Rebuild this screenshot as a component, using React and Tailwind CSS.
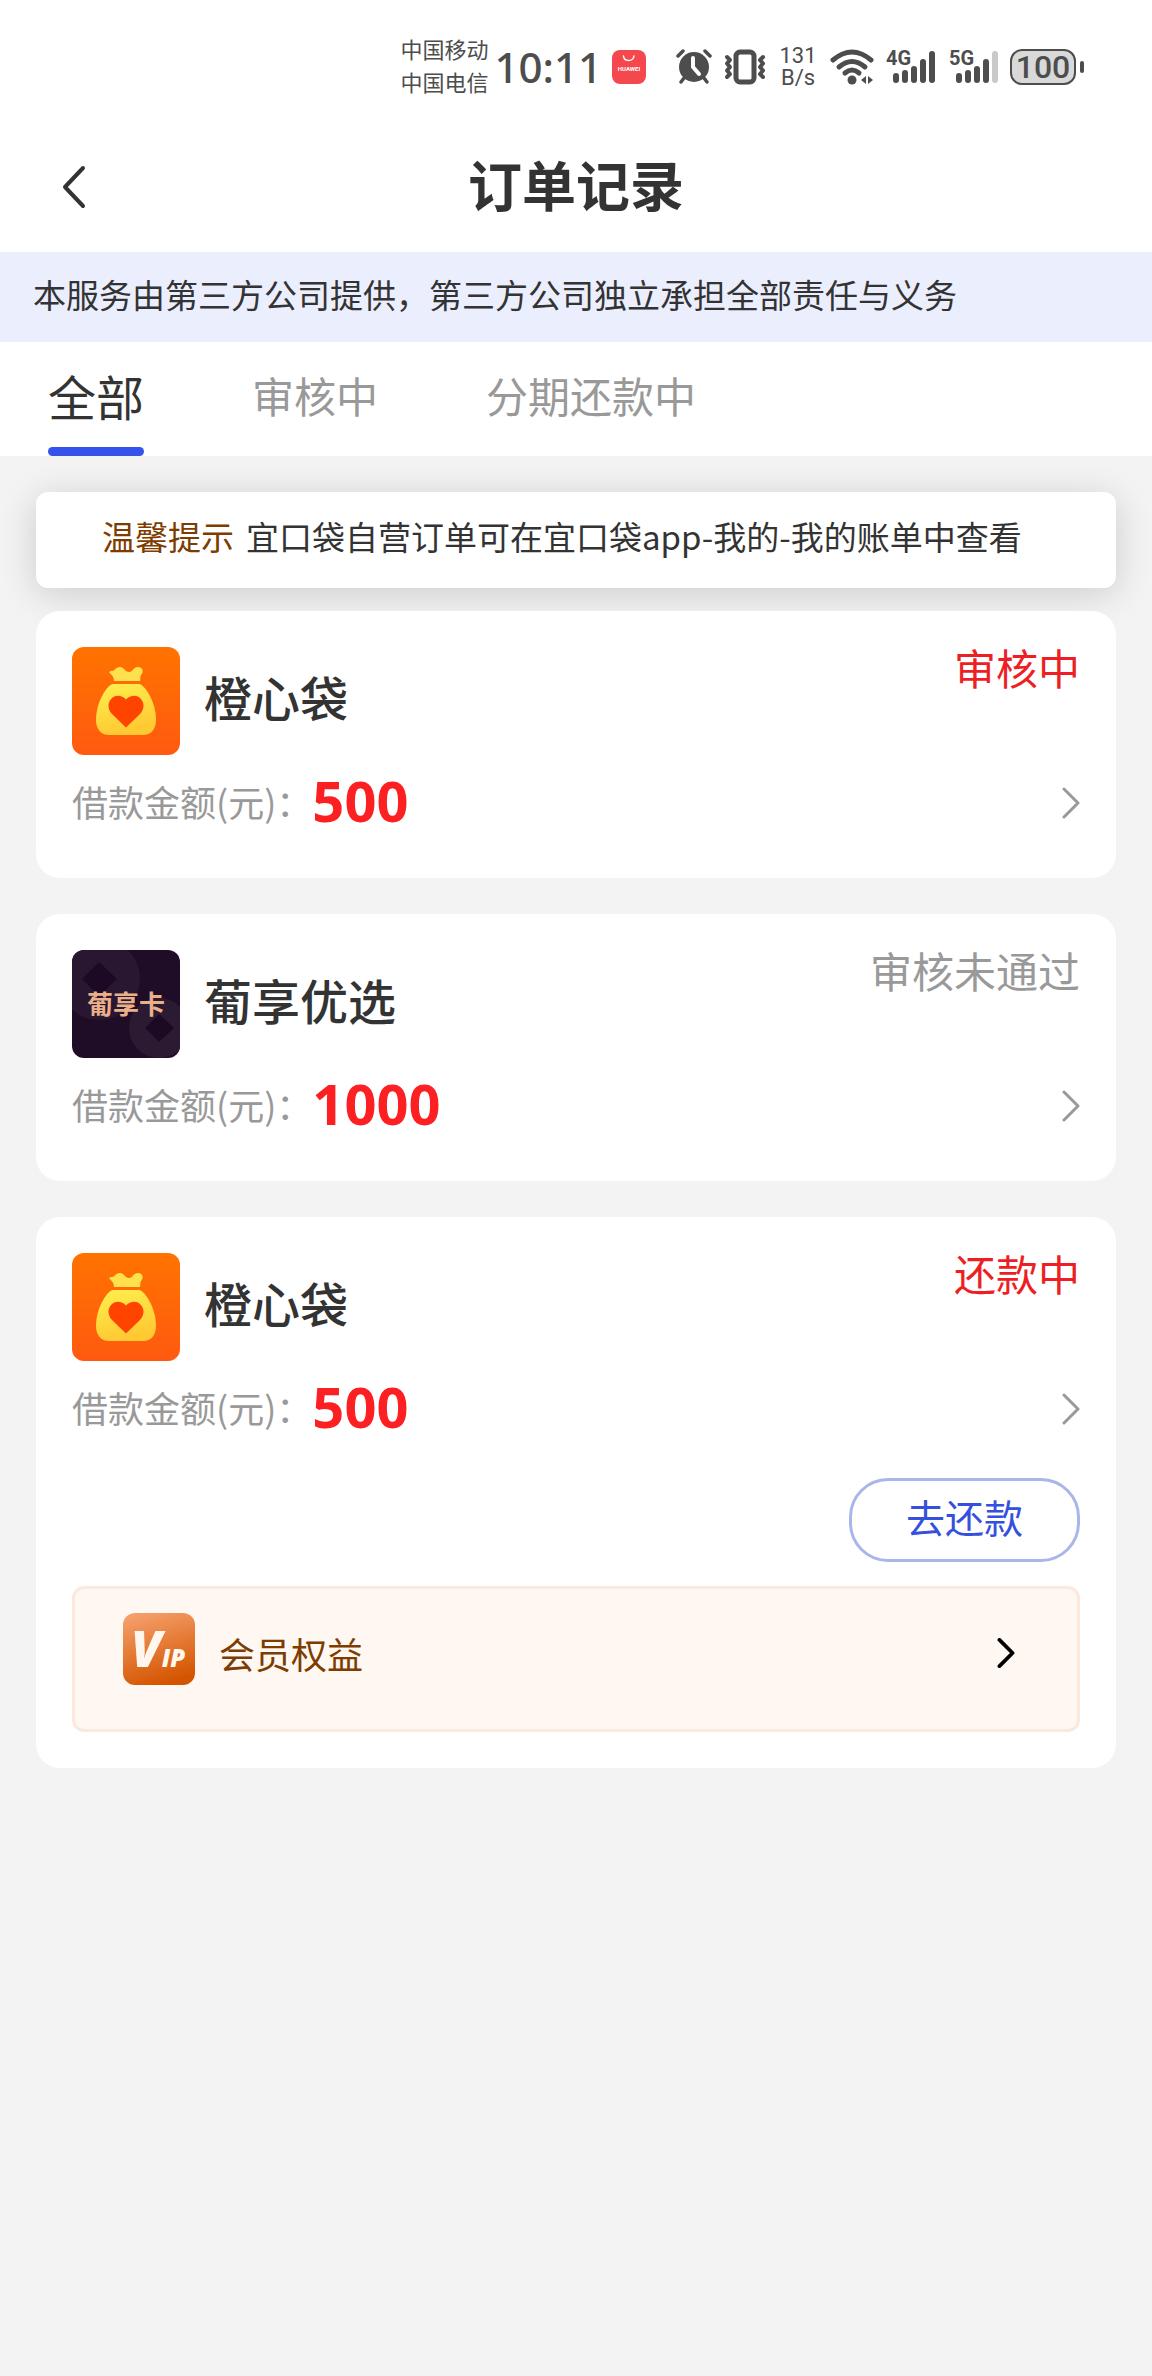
import { useState } from 'react'

const tabs = ['全部', '审核中', '分期还款中']

const orders = [
  { id: 1, name: '橙心袋', logo: 'bag', amount: '500', status: '审核中', statusColor: 'text-[#ee1f24]' },
  { id: 2, name: '葡享优选', logo: 'grape', amount: '1000', status: '审核未通过', statusColor: 'text-[#999999]' },
  { id: 3, name: '橙心袋', logo: 'bag', amount: '500', status: '还款中', statusColor: 'text-[#ee1f24]', repay: true },
]

function BagLogo() {
  return (
    <svg viewBox="0 0 108 108" className="size-[108px] shrink-0 rounded-xl" aria-hidden="true">
      <defs>
        <linearGradient id="bag-bg" x1="0" y1="0" x2="0" y2="1">
          <stop offset="0" stopColor="#ff7300" />
          <stop offset="1" stopColor="#ff5a10" />
        </linearGradient>
        <linearGradient id="bag-body" x1="0" y1="0" x2="0.3" y2="1">
          <stop offset="0" stopColor="#fff04e" />
          <stop offset="1" stopColor="#ffc933" />
        </linearGradient>
      </defs>
      <rect width="108" height="108" fill="url(#bag-bg)" />
      <path
        d="M42 34 C42 30 40 28 37.500 26 C37 24.500 38 24 40 24 C43 24 43 20 48 20 C52 20 53 25 57 25 C61 25 61 20 66 20 C71 20 72 25 69 28 C68 30 68.500 32 68 34 Z"
        fill="#ffe04f"
      />
      <path
        d="M41 37 H67 C72 37 84 54 84 73 C84 82 79 88 71 88 H37 C29 88 24 82 24 73 C24 54 36 37 41 37 Z"
        fill="url(#bag-body)"
      />
      <path
        d="M54 80.500 L40.500 67.500 C35 62 35.500 55 40 51 C44.500 47.500 50 48.500 54 52.500 C58 48.500 64 47.500 68 51 C72.500 55 73 62 67.500 67.500 Z"
        fill="#ff4400"
      />
    </svg>
  )
}

function GrapeLogo() {
  return (
    <svg viewBox="0 0 108 108" className="size-[108px] shrink-0 rounded-xl" role="img" aria-label="葡享卡">
      <rect width="108" height="108" fill="#1f0c26" />
      <circle cx="27" cy="29" r="41" fill="#291731" />
      <path d="M27 12 L45 29 L27 46 L10 29 Z" fill="#1c0a24" />
      <circle cx="87" cy="78" r="30" fill="#2c1a33" />
      <path d="M87 64 L102 78 L87 92 L73 78 Z" fill="#1c0a24" />
      <text
        x="54"
        y="64"
        textAnchor="middle"
        fill="#e9b08a"
        className="font-['Noto_Sans_CJK_SC',sans-serif] text-[26px] font-bold"
      >
        葡享卡
      </text>
    </svg>
  )
}

function VipLogo() {
  return (
    <svg viewBox="0 0 72 72" className="size-[72px] shrink-0 rounded-xl" aria-hidden="true">
      <defs>
        <linearGradient id="vip-bg" x1="0.2" y1="0" x2="0.5" y2="1">
          <stop offset="0" stopColor="#f5a06c" />
          <stop offset="1" stopColor="#d45500" />
        </linearGradient>
      </defs>
      <rect width="72" height="72" fill="url(#vip-bg)" />
      <text x="8" y="54" fill="#fff7ee" className="font-['Open_Sans',sans-serif] text-[50px] font-extrabold italic">
        V<tspan className="text-[24px]">IP</tspan>
      </text>
    </svg>
  )
}

function Chevron({ className, strokeWidth }) {
  return (
    <svg
      viewBox="0 0 18 32"
      className={className}
      fill="none"
      stroke="currentColor"
      strokeWidth={strokeWidth}
      strokeLinecap="round"
      strokeLinejoin="round"
      aria-hidden="true"
    >
      <path d="M2 2 L16 16 L2 30" />
    </svg>
  )
}

function Signal({ label, weak }) {
  return (
    <svg viewBox="0 -8 51 52" className="h-[52px] w-[51px] shrink-0" fill="none" strokeWidth="6" strokeLinecap="round" stroke="#4d4d4d" aria-label={label}>
      <text x="0" y="16" stroke="none" fill="#4d4d4d" className="font-['Roboto',sans-serif] text-[20px] font-bold">{label}</text>
      <path d="M10 27 V31 M19 24 V31 M28 20 V31 M37 13 V31" />
      <path d="M46 5 V31" stroke={weak ? '#c9c9c9' : '#4d4d4d'} />
    </svg>
  )
}

function StatusBar() {
  return (
    <div className="flex h-[122px] items-center justify-end pt-3 pr-[68px] text-[#4d4d4d]">
      <div className="pb-1 text-[22px] leading-[33px]">
        <div>中国移动</div>
        <div>中国电信</div>
      </div>
      <div className="ml-1.5 font-['Noto_Sans',sans-serif] text-[42px] font-medium leading-none">10:11</div>
      {/* AppGallery notification */}
      <svg viewBox="0 0 34 34" className="ml-2.5 size-[34px] shrink-0" aria-hidden="true">
        <rect width="34" height="34" rx="8" fill="#f4484e" />
        <path d="M11.500 6 C12 12 21 12 22 6" fill="none" stroke="#fff" strokeWidth="1.500" strokeLinecap="round" />
        <text x="17" y="21" textAnchor="middle" fill="#fff" className="font-['Roboto',sans-serif] text-[6px] font-bold">HUAWEI</text>
      </svg>
      {/* alarm */}
      <svg viewBox="0 0 36 36" className="ml-[30px] size-9 shrink-0" fill="none" stroke="#4d4d4d" strokeLinecap="round" strokeLinejoin="round" aria-hidden="true">
        <circle cx="18" cy="18" r="15" fill="#4d4d4d" stroke="none" />
        <path d="M2 7 L7 2 M34 7 L29 2" strokeWidth="3.500" />
        <path d="M8 29 L5 33 M28 29 L31 33" strokeWidth="3.500" />
        <path d="M17 9 V18 L23 25" stroke="#fff" strokeWidth="4" />
      </svg>
      {/* vibrate */}
      <svg viewBox="0 0 42 36" className="ml-3 h-9 w-[42px] shrink-0" fill="none" stroke="#4d4d4d" strokeLinecap="round" strokeLinejoin="round" aria-hidden="true">
        <rect x="12" y="3" width="18" height="30" rx="4" strokeWidth="5" />
        <path d="M3 8 L6 11 L3 14.500 L6 18 L3 21.500 L6 25 L3 28" strokeWidth="4" />
        <path d="M39 8 L36 11 L39 14.500 L36 18 L39 21.500 L36 25 L39 28" strokeWidth="4" />
      </svg>
      <div className="ml-3 w-10 text-center font-['Roboto',sans-serif] text-[22px] leading-[22px]">
        <div>131</div>
        <div>B/s</div>
      </div>
      {/* wifi */}
      <svg viewBox="0 0 44 36" className="ml-3 h-9 w-11 shrink-0" fill="none" stroke="#4d4d4d" strokeWidth="5" strokeLinecap="round" aria-hidden="true">
        <path d="M3 11 Q22 -5 41 11" />
        <path d="M9 18 Q22 7 35 18" />
        <path d="M15 24 Q22 18 29 24" />
        <circle cx="22" cy="31" r="4.500" fill="#4d4d4d" stroke="none" />
        <path d="M36 27 V35 L31 31 Z M38 27 V35 L43 31 Z" fill="#4d4d4d" stroke="none" />
      </svg>
      <div className="ml-3 flex gap-3">
        <Signal label="4G" />
        <Signal label="5G" weak />
      </div>
      <div className="ml-2.5 flex items-center gap-1">
        <div className="flex h-9 w-[66px] items-center justify-center rounded-xl border-2 border-[#4d4d4d] bg-[#d9d9d9] font-['Roboto',sans-serif] text-[32px] font-medium leading-none">
          100
        </div>
        <div className="h-3 w-1 rounded-full bg-[#4d4d4d]" />
      </div>
    </div>
  )
}

function OrderCard({ order }) {
  return (
    <li className={`relative rounded-3xl bg-white px-9 pt-9 ${order.repay ? 'pb-9' : 'pb-[39px]'}`}>
      <div className="flex items-start justify-between">
        <div className="flex items-center gap-6">
          {order.logo === 'bag' ? <BagLogo /> : <GrapeLogo />}
          <h2 className="pb-2.5 text-[48px] font-medium leading-[72px]">{order.name}</h2>
        </div>
        <span className={`text-[42px] leading-10 ${order.statusColor}`}>{order.status}</span>
      </div>

      <a href="#detail" className="mt-3 flex h-[72px] items-center">
        <span className="pb-1 text-[36px] text-[#999999]">借款金额(元)：</span>
        <span className="pb-1.5 font-['Noto_Sans',sans-serif] text-[56px] font-bold leading-none text-[#fc2022]">{order.amount}</span>
        <Chevron className="ml-auto h-8 w-[18px] text-[#999999]" strokeWidth="3" />
      </a>

      {order.repay && (
        <>
          <div className="mt-[33px] flex justify-end">
            <button
              type="button"
              className="h-[84px] w-[231px] rounded-[39px] border-3 border-[#aab5ea] pb-2 text-[39px] leading-none text-[#3550dc]"
            >
              去还款
            </button>
          </div>
          <a
            href="#member"
            className="mt-6 flex h-[146px] items-start rounded-xl border-3 border-[#fbe9de] bg-[#fff7f1] py-6 pr-[62px] pl-12"
          >
            <VipLogo />
            <span className="ml-6 pt-2.5 text-[36px] leading-[60px] text-[#7d3c00]">会员权益</span>
            <span className="ml-auto flex h-20 items-center">
              <Chevron className="h-[30px] w-[18px] text-black" strokeWidth="4" />
            </span>
          </a>
        </>
      )}
    </li>
  )
}

export default function App() {
  const [active, setActive] = useState(tabs[0])

  return (
    <div className="min-h-screen bg-[#f3f3f3] font-['Noto_Sans_CJK_SC',sans-serif] text-[#333333]">
      <header className="bg-white">
        <StatusBar />
        <div className="grid h-[130px] grid-cols-[1fr_auto_1fr] items-center px-[60px]">
          <button type="button" aria-label="返回" className="w-fit">
            <svg viewBox="0 0 27 44" className="h-11 w-[27px]" fill="none" stroke="#333333" strokeWidth="4" strokeLinecap="round" strokeLinejoin="round">
              <path d="M23 3 L5 22 L23 41" />
            </svg>
          </button>
          <h1 className="pb-1.5 text-[54px] font-bold leading-none">订单记录</h1>
        </div>
      </header>

      <p className="bg-[#ebeefd] px-[33px] pt-[17px] pb-[23px] text-[33px] leading-[50px]">
        本服务由第三方公司提供，第三方公司独立承担全部责任与义务
      </p>

      <nav className="flex h-[114px] gap-[108px] bg-white px-12">
        {tabs.map(tab => (
          <button
            key={tab}
            type="button"
            onClick={() => setActive(tab)}
            className={`flex flex-col items-center justify-between ${
              active === tab ? 'text-[48px]' : 'text-[42px] text-[#999999]'
            }`}
          >
            <span className="h-[105px] leading-[106px]">{tab}</span>
            {active === tab && <span className="h-[9px] w-full rounded-full bg-[#3552ea]" />}
          </button>
        ))}
      </nav>

      <main className="px-9 pt-9 pb-9">
        <div className="rounded-xl bg-white px-[66px] pt-[19px] pb-[27px] text-[33px] leading-[50px] shadow-[0_6px_36px_rgba(0,0,0,0.16)]">
          <span className="mr-3 text-[#7d3c00]">温馨提示</span>
          <span>宜口袋自营订单可在宜口袋app-我的-我的账单中查看</span>
        </div>

        <ul className="mt-[23px] space-y-9">
          {orders.map(order => (
            <OrderCard key={order.id} order={order} />
          ))}
        </ul>
      </main>
    </div>
  )
}
